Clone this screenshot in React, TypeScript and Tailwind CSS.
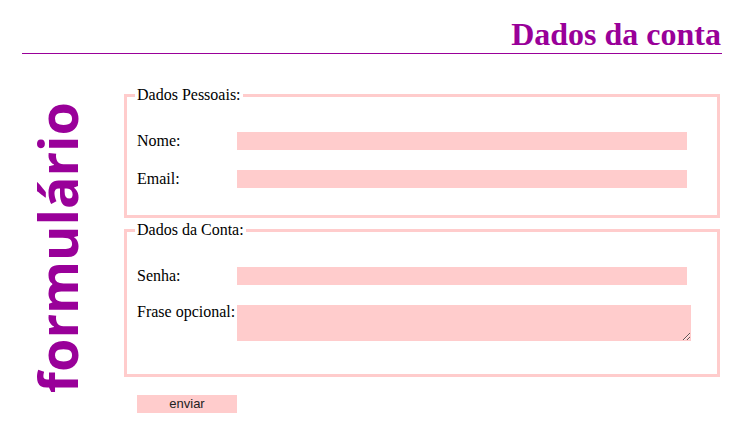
import React from "react";

export default function App() {
  const serif = { fontFamily: '"Liberation Serif", "Times New Roman", serif' };
  return (
    <div className="w-[741px] h-[434px] bg-white text-black overflow-hidden" style={serif}>
      <div className="ml-[22px] mt-[16px] w-[700px] text-right">
        <h1 className="pr-[1px] text-[32px] leading-[37px] font-bold text-[#990099]">Dados da conta</h1>
        <div className="h-[1px] bg-[#990099]" />
      </div>
      <div className="flex">
        <div className="w-[124px] shrink-0 pl-[30px] pt-[48px]">
          <div
            className="[writing-mode:vertical-rl] rotate-180 text-[54px] leading-[54px] font-bold text-[#990099]"
            style={{ fontFamily: '"Open Sans", sans-serif' }}
          >
            formulário
          </div>
        </div>
        <div className="w-[596px] shrink-0 pt-[32px]">
          <fieldset className="border-[3px] border-[#ffcccc] pl-[10px] pt-[28px] pb-[27px]">
            <legend className="-ml-[2px] px-[2px] text-[16px] leading-[18px]">Dados Pessoais:</legend>
            <div className="flex items-center h-[18px]">
              <label className="w-[100px] text-[16px] leading-[18px]">Nome:</label>
              <input className="w-[450px] h-[18px] bg-[#ffcccc] border-0 outline-none" />
            </div>
            <div className="flex items-center h-[18px] mt-[20px]">
              <label className="w-[100px] text-[16px] leading-[18px]">Email:</label>
              <input className="w-[450px] h-[18px] bg-[#ffcccc] border-0 outline-none" />
            </div>
          </fieldset>
          <fieldset className="mt-[3px] border-[3px] border-[#ffcccc] pl-[10px] pt-[28px] pb-[33px]">
            <legend className="-ml-[2px] px-[2px] text-[16px] leading-[18px]">Dados da Conta:</legend>
            <div className="flex items-center h-[18px]">
              <label className="w-[100px] text-[16px] leading-[18px]">Senha:</label>
              <input type="password" className="w-[450px] h-[18px] bg-[#ffcccc] border-0 outline-none" />
            </div>
            <div className="flex items-start mt-[20px]">
              <label className="w-[100px] -mt-[2px] text-[16px] leading-[18px]">Frase opcional:</label>
              <textarea className="block w-[454px] h-[36px] bg-[#ffcccc] border-0 outline-none resize" />
            </div>
          </fieldset>
          <button
            className="mt-[18px] ml-[13px] block w-[100px] h-[18px] bg-[#ffcccc] border-0 text-[13px] leading-[18px] text-[#222]"
            style={{ fontFamily: '"Liberation Sans", Arial, sans-serif' }}
          >
            enviar
          </button>
        </div>
      </div>
    </div>
  );
}
